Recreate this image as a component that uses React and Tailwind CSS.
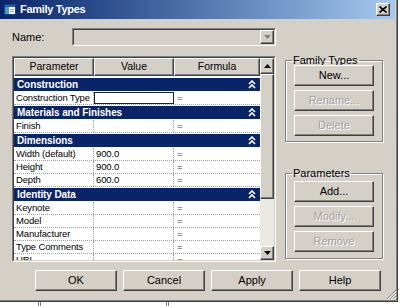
import React from "react";

const raised =
  "bg-[#d4d0c8] border border-t-white border-l-white border-r-[#404040] border-b-[#404040] shadow-[inset_-1px_-1px_0_#808080]";

function Btn({ children, disabled, className = "" }) {
  return (
    <div
      className={`${raised} h-[21px] flex items-center justify-center text-[11px] ${
        disabled ? "text-[#a0a0a0] text-shadow-[1px_1px_0_#ffffff]" : "text-black"
      } ${className}`}
    >
      {children}
    </div>
  );
}

function Chevrons() {
  return (
    <svg width="8" height="9" viewBox="0 0 8 9" className="mr-[4px]">
      <path d="M1 4 L4 1 L7 4" stroke="#fff" strokeWidth="1.6" fill="none" />
      <path d="M1 8 L4 5 L7 8" stroke="#fff" strokeWidth="1.6" fill="none" />
    </svg>
  );
}

function Section({ title }) {
  return (
    <div className="h-[15px] bg-white py-[1px]">
      <div className="h-[13px] bg-[#0a246a] flex items-center justify-between pl-[3px]">
        <span className="text-white font-bold text-[10px] tracking-[-0.1px] leading-none">{title}</span>
        <Chevrons />
      </div>
    </div>
  );
}

function Row({ name, value = "", edit }) {
  return (
    <div className="h-[13px] grid grid-cols-[80px_80px_86px] bg-white border-b border-dotted border-[#a0a0a0] text-[9.5px] tracking-[-0.15px] leading-none">
      <div className="flex items-center pl-[2px] border-r border-dotted border-[#a0a0a0] overflow-hidden whitespace-nowrap">{name}</div>
      <div className={`flex items-center pl-[2px] ${edit ? "border border-[#202020] bg-white" : "border-r border-dotted border-[#a0a0a0]"}`}>{value}</div>
      <div className="flex items-center pl-[3px] text-[#404040]">=</div>
    </div>
  );
}

function Arrow({ down, color = "#000" }) {
  return (
    <svg width="7" height="4" viewBox="0 0 7 4">
      {down ? <path d="M0 0 H7 L3.5 4 Z" fill={color} /> : <path d="M0 4 H7 L3.5 0 Z" fill={color} />}
    </svg>
  );
}

function Group({ title, children, className = "", contentClass = "" }) {
  return (
    <fieldset
      className={`border border-[#808080] shadow-[inset_1px_1px_0_#ffffff,1px_1px_0_#ffffff] px-[8px] ${className}`}
    >
      <legend className="ml-[-2px] px-[1px] text-[11px] leading-[12px] text-black">{title}</legend>
      <div className={`flex flex-col gap-[4px] ${contentClass}`}>{children}</div>
    </fieldset>
  );
}

export default function App() {
  return (
    <div
      className="w-[400px] h-[306px] bg-white overflow-hidden"
      style={{ fontFamily: '"Liberation Sans", Arial, sans-serif' }}
    >
      <div className="w-[398px] h-[302px] bg-[#d4d0c8] border-r border-b border-[#404040] shadow-[inset_-1px_-1px_0_#808080] flex flex-col">
        {/* title bar */}
        <div className="h-[19px] mr-[2px] bg-linear-to-r from-[#0a246a] to-[#a6caf0] flex items-center pl-[4px] pr-[5px]">
          <svg width="12" height="11" viewBox="0 0 12 11">
            <rect x="0.5" y="0.5" width="11" height="10" fill="#ffffff" stroke="#1c3f8c" />
            <rect x="1" y="1" width="10" height="2" fill="#2a5cc0" />
            <rect x="1" y="3" width="4" height="7" fill="#3aa6b9" />
            <rect x="6" y="5" width="4" height="1" fill="#8aa0c8" />
            <rect x="6" y="7" width="4" height="1" fill="#8aa0c8" />
          </svg>
          <span className="ml-[4px] text-white font-bold text-[11px] tracking-[-0.3px]">Family Types</span>
          <div className={`${raised} ml-auto w-[14px] h-[13px] flex items-center justify-center`}>
            <svg width="8" height="7" viewBox="0 0 8 7">
              <path d="M0.5 0.5 L7.5 6.5 M7.5 0.5 L0.5 6.5" stroke="#000" strokeWidth="1.6" />
            </svg>
          </div>
        </div>

        <div className="flex h-[243px]">
          {/* left column */}
          <div className="ml-[12px] w-[264px] pt-[9px] flex flex-col">
            <div className="h-[18px] flex items-center">
              <span className="w-[60px] text-[11px] text-black">Name:</span>
              <div className="w-[204px] h-[18px] border border-t-[#808080] border-l-[#808080] border-r-white border-b-white">
                <div className="h-full border border-t-[#404040] border-l-[#404040] border-r-[#d4d0c8] border-b-[#d4d0c8] flex justify-end">
                  <div className={`${raised} w-[14px] h-[14px] flex items-center justify-center`}>
                    <Arrow down color="#808080" />
                  </div>
                </div>
              </div>
            </div>

            <div className="mt-[10px] h-[206px] border border-t-[#808080] border-l-[#808080] border-r-white border-b-white">
              <div className="h-full border border-t-[#404040] border-l-[#404040] border-r-[#d4d0c8] border-b-[#d4d0c8] flex bg-white">
                <div className="w-[246px] overflow-hidden flex flex-col">
                  <div className="h-[16px] grid grid-cols-[80px_80px_86px] shrink-0 text-[10.5px] text-black">
                    <div className={`${raised} flex items-center justify-center`}>Parameter</div>
                    <div className={`${raised} flex items-center justify-center`}>Value</div>
                    <div className={`${raised} flex items-center justify-center`}>Formula</div>
                  </div>
                  <div className="pt-[3px] flex flex-col shrink-0 text-black">
                    <Section title="Construction" />
                    <Row name="Construction Type" edit />
                    <Section title="Materials and Finishes" />
                    <Row name="Finish" />
                    <Section title="Dimensions" />
                    <Row name="Width (default)" value="900.0" />
                    <Row name="Height" value="900.0" />
                    <Row name="Depth" value="600.0" />
                    <Section title="Identity Data" />
                    <Row name="Keynote" />
                    <Row name="Model" />
                    <Row name="Manufacturer" />
                    <Row name="Type Comments" />
                    <Row name="URL" />
                  </div>
                </div>
                <div className="w-[14px] flex flex-col">
                  <div className={`${raised} h-[16px] flex items-center justify-center shrink-0`}>
                    <Arrow />
                  </div>
                  <div className={`${raised} h-[125px] shrink-0`} />
                  <div className="flex-1 bg-[#ebe9e4]" />
                  <div className={`${raised} h-[14px] flex items-center justify-center shrink-0`}>
                    <Arrow down />
                  </div>
                </div>
              </div>
            </div>
          </div>

          {/* right column */}
          <div className="ml-[9px] w-[98px] pt-[35px] flex flex-col">
            <Group title="Family Types" className="pb-[5px]" contentClass="mt-[-1px]">
              <Btn>New...</Btn>
              <Btn disabled>Rename...</Btn>
              <Btn disabled>Delete</Btn>
            </Group>
            <Group title="Parameters" className="mt-[25px] pb-[6px]" contentClass="mt-[2px]">
              <Btn>Add...</Btn>
              <Btn disabled>Modify...</Btn>
              <Btn disabled>Remove</Btn>
            </Group>
          </div>
        </div>

        {/* bottom buttons */}
        <div className="pt-[8px] pl-[35px] flex gap-[6px] items-start">
          <Btn className="w-[83px]">OK</Btn>
          <Btn className="w-[83px]">Cancel</Btn>
          <Btn className="w-[83px]">Apply</Btn>
          <Btn className="w-[83px]">Help</Btn>
          <svg width="11" height="11" viewBox="0 0 11 11" className="mt-[19px] ml-[-1px]">
            <path d="M10 1 L1 10 M10 4 L4 10 M10 7 L7 10" stroke="#808080" strokeWidth="1" />
            <path d="M10.5 2 L2 10.5 M10.5 5 L5 10.5 M10.5 8 L8 10.5" stroke="#ffffff" strokeWidth="1" />
          </svg>
        </div>
      </div>
      <div className="h-[4px] relative">
        <div className="absolute left-[38px] top-0 w-[3px] h-[4px] border-x border-[#808080]" />
        <div className="absolute left-[166px] top-0 w-[3px] h-[4px] border-x border-[#808080]" />
      </div>
    </div>
  );
}
